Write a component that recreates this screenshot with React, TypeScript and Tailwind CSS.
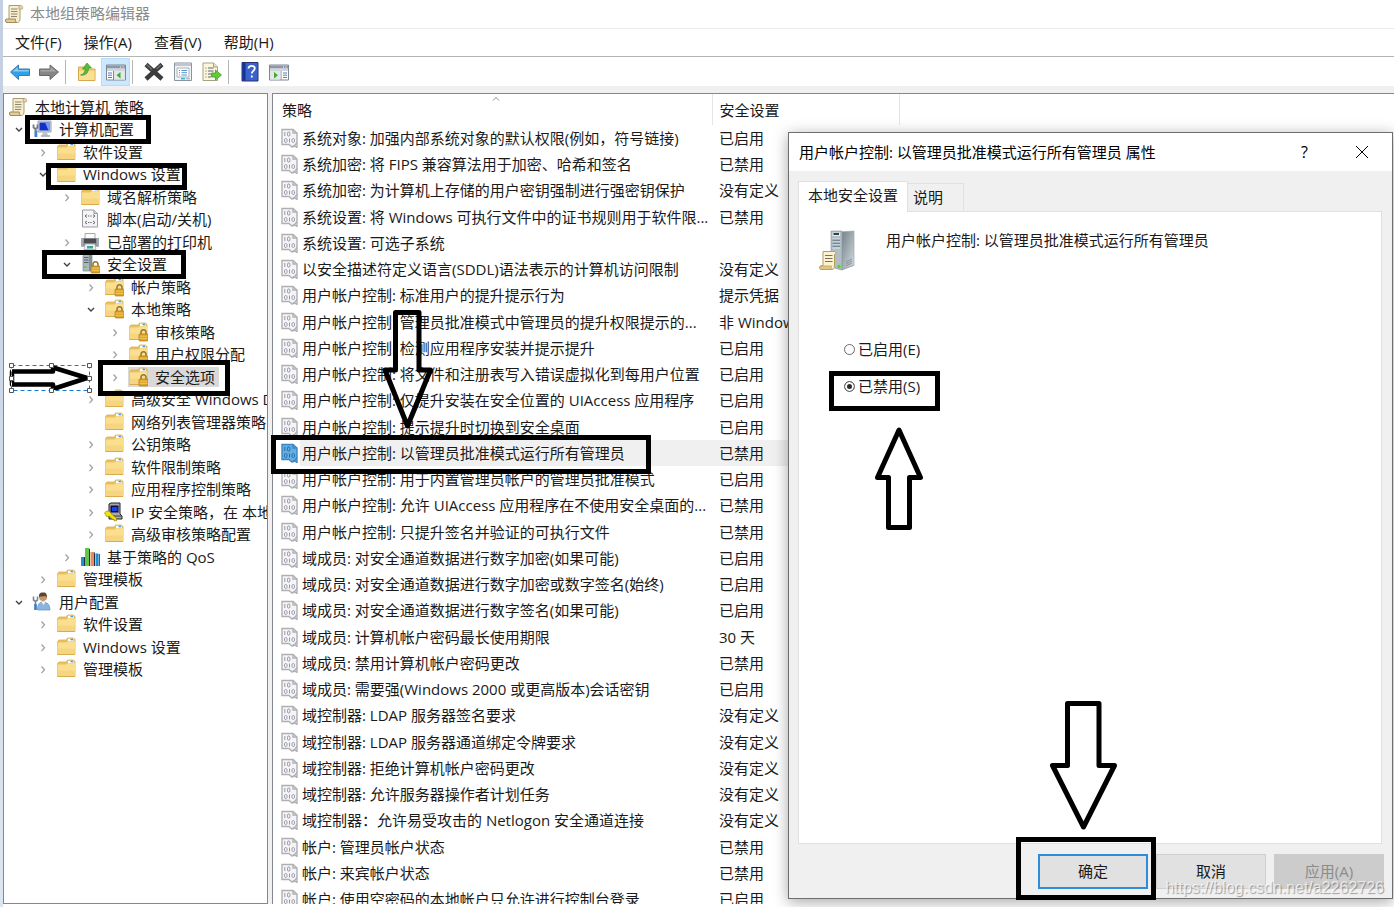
import { useState } from "react"
import type { ReactNode } from "react"
import clsx from "clsx"

type IconName = "scroll" | "computer" | "folder" | "script" | "printer" | "serverLock" | "folderLock" | "ipsec" | "qos" | "user"

type TreeNode = {
  level: number
  label: string
  icon: IconName
  state?: "open" | "closed"
  selected?: boolean
}

const tree: TreeNode[] = [
  { level: 0, label: "本地计算机 策略", icon: "scroll" },
  { level: 1, label: "计算机配置", icon: "computer", state: "open" },
  { level: 2, label: "软件设置", icon: "folder", state: "closed" },
  { level: 2, label: "Windows 设置", icon: "folder", state: "open" },
  { level: 3, label: "域名解析策略", icon: "folder", state: "closed" },
  { level: 3, label: "脚本(启动/关机)", icon: "script" },
  { level: 3, label: "已部署的打印机", icon: "printer", state: "closed" },
  { level: 3, label: "安全设置", icon: "serverLock", state: "open" },
  { level: 4, label: "帐户策略", icon: "folderLock", state: "closed" },
  { level: 4, label: "本地策略", icon: "folderLock", state: "open" },
  { level: 5, label: "审核策略", icon: "folderLock", state: "closed" },
  { level: 5, label: "用户权限分配", icon: "folderLock", state: "closed" },
  { level: 5, label: "安全选项", icon: "folderLock", state: "closed", selected: true },
  { level: 4, label: "高级安全 Windows Defender 防火墙", icon: "folder", state: "closed" },
  { level: 4, label: "网络列表管理器策略", icon: "folder" },
  { level: 4, label: "公钥策略", icon: "folder", state: "closed" },
  { level: 4, label: "软件限制策略", icon: "folder", state: "closed" },
  { level: 4, label: "应用程序控制策略", icon: "folder", state: "closed" },
  { level: 4, label: "IP 安全策略，在 本地计算机", icon: "ipsec", state: "closed" },
  { level: 4, label: "高级审核策略配置", icon: "folder", state: "closed" },
  { level: 3, label: "基于策略的 QoS", icon: "qos", state: "closed" },
  { level: 2, label: "管理模板", icon: "folder", state: "closed" },
  { level: 1, label: "用户配置", icon: "user", state: "open" },
  { level: 2, label: "软件设置", icon: "folder", state: "closed" },
  { level: 2, label: "Windows 设置", icon: "folder", state: "closed" },
  { level: 2, label: "管理模板", icon: "folder", state: "closed" },
]

const indent = ["pl-1", "pl-[7px]", "pl-[31px]", "pl-[55px]", "pl-[79px]", "pl-[103px]"]

const policies: [string, string][] = [
  ["系统对象: 加强内部系统对象的默认权限(例如，符号链接)", "已启用"],
  ["系统加密: 将 FIPS 兼容算法用于加密、哈希和签名", "已禁用"],
  ["系统加密: 为计算机上存储的用户密钥强制进行强密钥保护", "没有定义"],
  ["系统设置: 将 Windows 可执行文件中的证书规则用于软件限...", "已禁用"],
  ["系统设置: 可选子系统", ""],
  ["以安全描述符定义语言(SDDL)语法表示的计算机访问限制", "没有定义"],
  ["用户帐户控制: 标准用户的提升提示行为", "提示凭据"],
  ["用户帐户控制: 管理员批准模式中管理员的提升权限提示的...", "非 Windows 二进制文件的同意提示"],
  ["用户帐户控制: 检测应用程序安装并提示提升", "已启用"],
  ["用户帐户控制: 将文件和注册表写入错误虚拟化到每用户位置", "已启用"],
  ["用户帐户控制: 仅提升安装在安全位置的 UIAccess 应用程序", "已启用"],
  ["用户帐户控制: 提示提升时切换到安全桌面", "已启用"],
  ["用户帐户控制: 以管理员批准模式运行所有管理员", "已禁用"],
  ["用户帐户控制: 用于内置管理员帐户的管理员批准模式", "已启用"],
  ["用户帐户控制: 允许 UIAccess 应用程序在不使用安全桌面的...", "已禁用"],
  ["用户帐户控制: 只提升签名并验证的可执行文件", "已禁用"],
  ["域成员: 对安全通道数据进行数字加密(如果可能)", "已启用"],
  ["域成员: 对安全通道数据进行数字加密或数字签名(始终)", "已启用"],
  ["域成员: 对安全通道数据进行数字签名(如果可能)", "已启用"],
  ["域成员: 计算机帐户密码最长使用期限", "30 天"],
  ["域成员: 禁用计算机帐户密码更改", "已禁用"],
  ["域成员: 需要强(Windows 2000 或更高版本)会话密钥", "已启用"],
  ["域控制器: LDAP 服务器签名要求", "没有定义"],
  ["域控制器: LDAP 服务器通道绑定令牌要求", "没有定义"],
  ["域控制器: 拒绝计算机帐户密码更改", "没有定义"],
  ["域控制器: 允许服务器操作者计划任务", "没有定义"],
  ["域控制器：允许易受攻击的 Netlogon 安全通道连接", "没有定义"],
  ["帐户: 管理员帐户状态", "已禁用"],
  ["帐户: 来宾帐户状态", "已禁用"],
  ["帐户: 使用空密码的本地帐户只允许进行控制台登录", "已启用"],
]

const SELECTED_POLICY = 12

function ScrollShape() {
  return (
    <>
      <path d="M5 1.500h11v13c0 2.500-1 4-2.500 4H3c-1.500 0-2-2-.5-3h2.500z" fill="#f7edcb" stroke="#a99c78" />
      <path d="M2 15h9.500c-.5 1.500 0 3.500 1.500 3.500H3c-1.500 0-2-2.500-1-3.500z" fill="#e2cd96" stroke="#a08c5c" />
      <path d="M15 5V3c0-1 1-1.700 2.200-1.500C19 2 19 5 18 5z" fill="#e8d9a8" stroke="#a99c78" strokeWidth=".8" />
      <path d="M7 5h6.500M7 7.500h6.500M7 10h6.500M7 12.500h6" stroke="#8d8672" />
    </>
  )
}

function FolderShape() {
  return (
    <>
      <path d="M1.500 4.500 3 3h7.500l1-2h6l1.500 1.500V17.500H1.500z" fill="#e8c165" stroke="#d9ad4c" strokeWidth=".8" />
      <path d="M12 1.700h5.500V4H12z" fill="#fff" />
      <path d="M14.500 1.700H17v1.600h-2.500z" fill="#4a9be0" />
      <path d="M1.500 5.500h9L12 4.200h7V17.500H1.500z" fill="#fbdf8f" />
      <path d="M2 11.500h17v6H2z" fill="#f6d580" />
      <path d="M1.500 17.500h17.500" stroke="#d9ac4b" />
    </>
  )
}

function LockShape() {
  return (
    <>
      <path d="M13 12.500V10.500a2.500 2.800 0 0 1 5 0v2" fill="none" stroke="#8f7a38" strokeWidth="1.500" />
      <rect x="11" y="12" width="9" height="7" rx="1" fill="#dfa42a" stroke="#a87913" strokeWidth=".7" />
      <path d="M11.500 14.200h8M11.500 16.500h8" stroke="#f7cc5c" strokeWidth=".8" />
    </>
  )
}

function TreeIcon({ name }: { name: IconName }) {
  return (
    <svg className="size-5 shrink-0" viewBox="0 0 20 20" aria-hidden="true">
      {name === "scroll" && <ScrollShape />}
      {name === "folder" && <FolderShape />}
      {name === "folderLock" && (
        <>
          <FolderShape />
          <LockShape />
        </>
      )}
      {name === "computer" && (
        <>
          <path d="M6 2h13v11H6z" fill="#d7dce2" stroke="#9aa2ac" />
          <path d="M7.500 3.500h10v8h-10z" fill="#1430c8" />
          <path d="M13 3.500h4.500v8h-1z" fill="#6f9cf5" />
          <path d="M11 13.500h4l1 3h-6z" fill="#bcc2ca" />
          <path d="M9 17h9" stroke="#a0a6ae" strokeWidth="1.500" />
          <path d="M1.500 5.500v3l2 1.500 2-1.500v-3M3.500 9.500V18" fill="none" stroke="#727c88" strokeWidth="1.800" />
          <path d="M4 11.500V18" stroke="#3f86cf" strokeWidth="2.500" />
        </>
      )}
      {name === "script" && (
        <>
          <path d="M2.500 1h11.500l3.500 3.500V18h-15z" fill="#f4f4f6" stroke="#9b9ba0" />
          <path d="M14 1v3.500h3.500" fill="#d6d6da" stroke="#9b9ba0" />
          <path d="m7 5.500-2 1.500 2 1.500m6-3 2 1.500-2 1.500m-5-1.500h1.300m1 0h1.300M7 12l-2 1.500L7 15m6-3 2 1.500-2 1.500m-5-1.500h1.300m1 0h1.300" fill="none" stroke="#66666c" />
        </>
      )}
      {name === "printer" && (
        <>
          <path d="M5 1.500h10V7H5z" fill="#fbfbfb" stroke="#a5a8ac" />
          <path d="M1 6h18v8.500H1z" fill="#7d8287" />
          <path d="M4 7h12v4H4z" fill="#4a4d50" />
          <path d="M1 6h2.500v8.500H1zM16.500 6H19v8.500h-2.500z" fill="#a3a8ad" />
          <path d="M5 12h10l1 5.500H4z" fill="#edf1f4" stroke="#9aa0a5" strokeWidth=".7" />
          <path d="M7 14h3v2.500H7z" fill="#2fa2d8" />
          <path d="M10 14h3v2.500h-3z" fill="#42a96a" />
        </>
      )}
      {name === "serverLock" && (
        <>
          <path d="M3 1.500 5 0h7v17H3z" fill="#aeb7be" stroke="#7f8a92" strokeWidth=".7" />
          <path d="M9 .5h3V17H9z" fill="#7f919b" />
          <path d="M4 3.500h4.500M4 6h4.500M4 8.500h4.500" stroke="#53626c" />
          <path d="M4 13h2.500" stroke="#5cc43e" strokeWidth="1.500" />
          <LockShape />
        </>
      )}
      {name === "ipsec" && (
        <>
          <path d="m5 2 2-1h9v11l2 2v3H5z" fill="#a7a9ac" stroke="#222" />
          <path d="M6.500 3.500h8v7h-8z" fill="#0b0b46" />
          <path d="M8 5h5.500v4H8z" fill="#1746e0" />
          <path d="M5 14h12" stroke="#3c3c3c" />
          <path d="M.5 11 2.500 9l3 .2L7 11.500l5.500 5v2.300H10v-1.500H8.500L5.500 14.300 2.500 14.500z" fill="#f4e20c" stroke="#857800" strokeWidth=".6" />
        </>
      )}
      {name === "qos" && (
        <>
          <path d="M1 10h4v9H1z" fill="#1793dd" />
          <path d="M5 1h4.500v18H5z" fill="#5fc84c" />
          <path d="M10.500 5H14v14h-3.500z" fill="#f08762" />
          <path d="M15.500 6.500h3V19h-3z" fill="#1793dd" />
          <path d="M4.500 10v9M9.500 2v17M14.500 5.500V19M19.300 7v12" stroke="#253341" />
        </>
      )}
      {name === "user" && (
        <>
          <circle cx="11" cy="5" r="4" fill="#c99668" />
          <path d="M7 5c-.5-4 2-5 4.500-4.500 2.500 0 4 2 3 5.500l-1-2c-2 .5-4 .2-6.500 1z" fill="#584636" />
          <path d="M5.500 18c0-6 2-8 5.500-8s7 2 7 8z" fill="#8ab5dd" stroke="#6691bc" strokeWidth=".7" />
          <path d="m9.500 10 2 3 2-3z" fill="#f3f7fa" />
          <path d="M1.500 4.500V8l2 1.500 2-1.500V4.500M3.500 9v9" fill="none" stroke="#7c8793" strokeWidth="1.600" />
          <path d="M3.500 12v6" stroke="#3e7fc4" strokeWidth="2.600" />
        </>
      )}
    </svg>
  )
}

function Chevron({ state }: { state?: "open" | "closed" }) {
  return (
    <svg className="mr-[5px] size-4 shrink-0" viewBox="0 0 16 16" fill="none" aria-hidden="true">
      {state === "open" && <path d="m5 7 3 3 3-3" stroke="#404040" strokeWidth="1.400" />}
      {state === "closed" && <path d="m6.500 5.500 3 3.300-3 3.300" stroke="#a3a3a3" strokeWidth="1.300" />}
    </svg>
  )
}

function PolicyIcon({ selected }: { selected: boolean }) {
  const stroke = selected ? "#3d88c4" : "#b0b0b3"
  const ink = selected ? "#20659f" : "#8f8da3"
  return (
    <svg className="h-5 w-[17px]" viewBox="0 0 17 20" fill="none" aria-hidden="true">
      <path d="M1 1.500h11l4 3.500V19.500l-3-2-2 1.500-3-2.500H1z" fill={selected ? "#65aee2" : "#f5f5f7"} stroke={stroke} strokeWidth="1.400" />
      <path d="M12 1.500v3.500h4M12 19c2-1 2.500-3 4-4.500" stroke={stroke} strokeWidth="1.400" />
      <path
        d="M3.800 4v4M3.500 11.500a1.300 1.300 0 0 1 2.500 0v2a1.300 1.300 0 0 1-2.500 0zM6.500 5.200a1.200 1.200 0 0 1 2.400 0v1.700a1.200 1.200 0 0 1-2.400 0zM8.500 10.500v4M11 11.500a1.300 1.300 0 0 1 2.500 0v2a1.300 1.300 0 0 1-2.500 0z"
        stroke={ink}
        strokeWidth=".9"
      />
    </svg>
  )
}

function ToolButton({ label, active, children }: { label: string; active?: boolean; children: ReactNode }) {
  return (
    <button
      type="button"
      aria-label={label}
      className={clsx(
        "flex h-7 w-[29px] items-center justify-center border",
        active ? "border-[#b5dcfa] bg-[#cce8ff]" : "border-transparent",
      )}
    >
      <svg className="size-5" viewBox="0 0 20 20" fill="none" aria-hidden="true">
        {children}
      </svg>
    </button>
  )
}

function Separator() {
  return <div className="ml-0.5 mr-1.5 h-6 w-px bg-[#b4b4b4]" />
}

function PaneShape({ flip }: { flip?: boolean }) {
  return (
    <>
      <path d="M.5 3h19v15H.5z" fill="#fff" stroke="#7d8794" />
      <path d="M1 3.500h18v3H1z" fill="#8d97a5" />
      <path d="M14 5h1m1.500 0h1" stroke="#fff" />
      <path d="M1 8h18" stroke="#c2c8d0" strokeWidth="1.500" />
      {flip ? (
        <>
          <path d="M12 9v9" stroke="#7d8794" />
          <path d="M14 11h4M14 13.200h4M14 15.500h4" stroke="#4a7fc0" />
          <path d="M1 9h10.500v8.500H1z" fill="#e3e6ea" />
          <path d="m5 10 4 3.300-4 3.300z" fill="#3fae2a" />
        </>
      ) : (
        <>
          <path d="M7.500 9v9" stroke="#7d8794" />
          <path d="M2 11h4M2 13.200h4M2 15.500h4" stroke="#4a7fc0" />
          <path d="M8 9h11v8.500H8z" fill="#e3e6ea" />
          <path d="m14.500 10-4 3.300 4 3.300z" fill="#3fae2a" />
        </>
      )}
    </>
  )
}

function Toolbar() {
  return (
    <div className="flex h-[29px] items-center bg-white pl-0.5">
      <ToolButton label="后退">
        <path d="M.5 10 8.500 3v4h11v6.500h-11v4z" fill="#31a0e6" stroke="#4378a5" />
        <path d="M2.500 9.500 7.800 5v3h11v1.500z" fill="#7fd0fa" />
      </ToolButton>
      <ToolButton label="前进">
        <path d="M19.500 10 11 3v4H.5v6.500H11v4z" fill="#868686" stroke="#686868" />
        <path d="m17.500 9.500-6-4.500v3h-10v1.500z" fill="#a6a6a6" />
      </ToolButton>
      <Separator />
      <ToolButton label="上移一级">
        <path d="M1.500 5h6l2 2H18v11.500H1.500z" fill="#f3cf78" stroke="#d3aa50" />
        <path d="M2 9h15.500v9H2z" fill="#fbdf93" />
        <path d="M3.500 13c3-.5 4.500-3 4.700-6H5.500L10 1l4.500 5h-3c0 5-3 8-8 7z" fill="#58bc3b" stroke="#398c24" strokeWidth=".6" />
      </ToolButton>
      <ToolButton label="显示/隐藏控制台树" active>
        <PaneShape />
      </ToolButton>
      <Separator />
      <ToolButton label="删除">
        <path d="m2 2.500 16 14.500M18 2.500 2 17" stroke="#3c3c3c" strokeWidth="4.500" />
        <path d="m2.500 2.500 5.500 5M17 3l-4.500 4" stroke="#717171" strokeWidth="1.500" />
      </ToolButton>
      <ToolButton label="属性">
        <path d="M1.500 1h17v17.500h-17z" fill="#f1f4f6" stroke="#8a949c" />
        <path d="M2 1.500h16v2.500H2z" fill="#bfc6cc" />
        <path d="M4 6h12v9H4z" fill="#fff" stroke="#a5b4c1" />
        <path d="M6 8.500h1m1.500 0H14M6 10.700h1m1.500 0H14M6 13h1m1.500 0H14" stroke="#5993c5" />
        <path d="M8 16.700h4" stroke="#36b3d8" strokeWidth="1.500" />
        <path d="M13 16.700h4" stroke="#b4bcc2" strokeWidth="1.500" />
      </ToolButton>
      <ToolButton label="导出列表">
        <path d="M1 1h10.500l4 4v13.500H1z" fill="#fbf6dc" stroke="#a8a282" />
        <path d="M11.500 1v4h4" fill="#e7dfb9" stroke="#a8a282" />
        <path d="M3.500 6h1M6 6h5.500M3.500 9h1M6 9h5.500M3.500 12h1M6 12h3M3.500 15h1M6 15h3" stroke="#5f6470" />
        <path d="M9.500 11h4V8l6 5-6 5v-3h-4z" fill="#5ecb3b" stroke="#38912a" strokeWidth=".7" />
      </ToolButton>
      <Separator />
      <ToolButton label="帮助">
        <path d="M2 .5h16V19H2z" fill="#3a62cc" stroke="#26356f" />
        <path d="M2.500 1h3v17.500h-3z" fill="#163391" />
        <path d="M8.500 6.500c0-3.500 6.300-3.500 6.300-.2 0 2.500-3 2.700-3 5.200M11.800 13.500v2" stroke="#fff" strokeWidth="1.800" />
      </ToolButton>
      <ToolButton label="显示/隐藏操作窗格">
        <PaneShape flip />
      </ToolButton>
    </div>
  )
}

function ConsoleTree() {
  return (
    <nav className="w-[265px] shrink-0 overflow-hidden border border-[#828790] bg-white pt-px" aria-label="控制台树">
      <ul>
        {tree.map((node, i) => (
          <li key={i} className={clsx("flex h-[22px] items-center odd:h-[23px]", indent[node.level])}>
            {node.level > 0 && <Chevron state={node.state} />}
            <a
              href="#"
              className={clsx("flex items-center gap-[7px] whitespace-nowrap pr-1 leading-5", node.selected && "bg-[#d9d9d9]")}
            >
              <TreeIcon name={node.icon} />
              {node.label}
            </a>
          </li>
        ))}
      </ul>
    </nav>
  )
}

function PolicyList() {
  return (
    <main className="min-w-0 flex-1 overflow-hidden border-l border-t border-[#828790] bg-white">
      <table className="w-full table-fixed border-collapse text-left">
        <colgroup>
          <col className="w-[439px]" />
          <col className="w-[187px]" />
          <col />
        </colgroup>
        <thead>
          <tr className="h-[31px]">
            <th className="relative border-r border-[#e5e5e5] p-0 pl-[9px] font-normal leading-5">
              策略
              <svg className="absolute left-1/2 top-0.5 h-1.5 w-2" viewBox="0 0 8 6" fill="none" aria-hidden="true">
                <path d="m1 4.500 3-3 3 3" stroke="#8c8c8c" />
              </svg>
            </th>
            <th className="border-r border-[#e5e5e5] p-0 pl-[7px] font-normal leading-5">安全设置</th>
            <th className="p-0" aria-label="空列" />
          </tr>
        </thead>
        <tbody>
          {policies.map(([name, value], i) => (
            <tr key={name} className="h-[26px] nth-[4n]:h-[27px]">
              <td className="p-0">
                <div className="flex items-center whitespace-nowrap pl-2 leading-[26px]">
                  <PolicyIcon selected={i === SELECTED_POLICY} />
                  <span className={clsx("ml-[2px] flex-1 pl-0.5", i === SELECTED_POLICY && "bg-[#f0f0f0]")}>{name}</span>
                </div>
              </td>
              <td className={clsx("overflow-hidden whitespace-nowrap p-0 pl-[7px] leading-[26px]", i === SELECTED_POLICY && "bg-[#f0f0f0]")}>
                {value}
              </td>
              <td className="p-0" />
            </tr>
          ))}
        </tbody>
      </table>
    </main>
  )
}

function ServerIcon() {
  return (
    <svg className="h-[42px] w-10 shrink-0" viewBox="0 0 40 42" aria-hidden="true">
      <defs>
        <linearGradient id="server-side" x1="0" y1="0" x2="1" y2="1">
          <stop offset="0" stopColor="#73828b" />
          <stop offset="1" stopColor="#d5dde0" />
        </linearGradient>
      </defs>
      <path d="m12 2 4-1 19 1v34l-12 4-11-3z" fill="#b4bec3" />
      <path d="m23 2 12-1v34l-12 5z" fill="url(#server-side)" stroke="#94a0a6" strokeWidth=".6" />
      <path d="M12 1h11v39l-11-3z" fill="#b3bec4" stroke="#87949b" strokeWidth=".6" />
      <path d="M13.500 2.500H21v3.500h-7.500z" fill="#e7edf0" />
      <path d="M14.500 3h5.500v2h-5.500z" fill="#2b404c" />
      <path d="M13.500 9H21M13.500 12H21M13.500 15H21M13.500 18H21" stroke="#dbe4e8" />
      <path d="M13.500 10.200H21M13.500 13.200H21M13.500 16.200H21" stroke="#5c7380" />
      <circle cx="20" cy="36.500" r="1.800" fill="#52da29" />
      <path d="m27 32 6-3m-6 5 6-3m-6 5 6-3" stroke="#7e8b91" strokeWidth=".8" />
      <path d="M4 21.500h11c2 0 2.500 2.500.5 3V36c0 2-1 3.500-3 3.500H2.500c-2.500 0-2-4 0-4H4z" fill="#fbf2d0" stroke="#b39b62" />
      <path d="M1.500 36h11c-1 1.500 0 3.500 1.500 3.500H2.500c-2 0-2.500-2.500-1-3.500z" fill="#e3c67f" stroke="#b39b62" strokeWidth=".7" />
      <path d="M6 25.500h7.500M6 28.500h7.500M6 31.500h7.500" stroke="#77705f" />
    </svg>
  )
}

function PropertiesDialog() {
  const [enabled, setEnabled] = useState(false)
  const radio =
    "mt-px mr-[3px] size-[11px] appearance-none rounded-full border border-[#6b6b6b] bg-white checked:bg-[#2b2b2b] checked:shadow-[inset_0_0_0_2px_white]"
  const button = "h-[35px] w-[110px] bg-[#e1e1e1]"

  return (
    <section
      role="dialog"
      aria-label="用户帐户控制: 以管理员批准模式运行所有管理员 属性"
      className="absolute bottom-2 left-[788px] right-px top-[132px] flex flex-col border border-[#6e6e6e] bg-[#f0f0f0] shadow-[0_3px_14px_rgba(0,0,0,0.35)]"
    >
      <header className="flex h-[38px] shrink-0 items-center bg-white pl-2.5 pr-0.5 text-black">
        <h2 className="flex-1">用户帐户控制: 以管理员批准模式运行所有管理员 属性</h2>
        <button type="button" className="w-[57px] text-base" aria-label="帮助">
          ?
        </button>
        <button type="button" className="flex w-[57px] justify-center" aria-label="关闭">
          <svg className="size-3" viewBox="0 0 12 12" fill="none" stroke="#000" aria-hidden="true">
            <path d="m0 0 12 12M12 0 0 12" />
          </svg>
        </button>
      </header>

      <div className="mt-2.5 flex h-[30px] shrink-0 items-end px-[9px]" role="tablist">
        <button type="button" role="tab" aria-selected="true" className="z-10 -mb-px h-[31px] w-[110px] border border-b-0 border-[#e0e0e0] bg-white pb-1">
          本地安全设置
        </button>
        <button type="button" role="tab" aria-selected="false" className="h-7 w-14 border border-b-0 border-l-0 border-[#e0e0e0] pl-[5px] text-left">
          说明
        </button>
      </div>

      <div className="ml-[9px] mr-2.5 flex-1 border border-[#e0e0e0] bg-white pl-5 pt-[18px]" role="tabpanel">
        <div className="flex">
          <ServerIcon />
          <p className="ml-[27px] leading-5">用户帐户控制: 以管理员批准模式运行所有管理员</p>
        </div>
        <fieldset className="mt-[67px] flex flex-col gap-[17px] pl-[25px]">
          <label className="flex items-center leading-5">
            <input type="radio" name="policy" className={radio} checked={enabled} onChange={() => setEnabled(true)} />
            已启用(E)
          </label>
          <label className="flex items-center leading-5">
            <input type="radio" name="policy" className={radio} checked={!enabled} onChange={() => setEnabled(false)} />
            已禁用(S)
          </label>
        </fieldset>
      </div>

      <footer className="flex justify-end gap-2 pb-[9px] pr-2 pt-2.5">
        <button type="button" className={clsx(button, "border-2 border-[#2f8bdb]")}>
          确定
        </button>
        <button type="button" className={clsx(button, "border border-[#cfcfcf]")}>
          取消
        </button>
        <button type="button" disabled className="h-[35px] w-[110px] bg-[#cccccc] text-[#8b8b8b]">
          应用(A)
        </button>
      </footer>
    </section>
  )
}

// hand-drawn markers that sit on top of the windows
function Annotations() {
  const box = "absolute border-[5px] border-black"
  return (
    <div className="pointer-events-none absolute inset-0">
      <div className={clsx(box, "left-[25px] top-[115px] h-[29px] w-[126px]")} />
      <div className={clsx(box, "left-[46px] top-[163px] h-[27px] w-[141px]")} />
      <div className={clsx(box, "left-[42px] top-[250px] h-[29px] w-[144px]")} />
      <div className={clsx(box, "left-[98px] top-[360px] h-[36px] w-[132px]")} />
      <div className={clsx(box, "left-[271px] top-[435px] h-[39px] w-[380px]")} />
      <div className={clsx(box, "left-[829px] top-[371px] h-[40px] w-[111px]")} />
      <div className={clsx(box, "left-[1016px] top-[837px] h-[63px] w-[140px]")} />

      <svg className="absolute left-[380px] top-[308px] h-[124px] w-[56px]" viewBox="380 308 56 124" fill="none" stroke="#000" strokeWidth="5" strokeLinejoin="round">
        <path d="M395.500 312.500h23.500v57.500h11.500l-23 56-22.500-56h10.500z" />
      </svg>
      <svg className="absolute left-[872px] top-[424px] h-[108px] w-[54px]" viewBox="872 424 54 108" fill="none" stroke="#000" strokeWidth="5" strokeLinejoin="round">
        <path d="M899 430 920.500 477.500h-11v50h-21v-50h-11z" />
      </svg>
      <svg className="absolute left-[1046px] top-[698px] h-[134px] w-[74px]" viewBox="1046 698 74 134" fill="none" stroke="#000" strokeWidth="5" strokeLinejoin="round">
        <path d="M1067.500 703.500h31.500v62h15.500l-31 61.500-31-61.500h15z" />
      </svg>
      <svg className="absolute left-[6px] top-[360px] h-[36px] w-[90px]" viewBox="6 360 90 36" fill="none">
        <path d="M12 371.500H53V367.500L87 378 53 389V384.500H12z" fill="#fff" stroke="#000" strokeWidth="4.500" strokeLinejoin="round" />
        <path d="M11.500 365.500h78v25h-78z" stroke="#fff" />
        <path d="M11.500 365.500h78v25h-78z" stroke="#1878d0" strokeDasharray="4 3" />
        <path
          d="M9.500 363.500h4v4h-4zM49.500 363.500h4v4h-4zM87.500 363.500h4v4h-4zM9.500 376.500h4v4h-4zM87.500 376.500h4v4h-4zM9.500 388.500h4v4h-4zM49.500 388.500h4v4h-4zM87.500 388.500h4v4h-4z"
          fill="#fff"
          stroke="#555"
        />
      </svg>
    </div>
  )
}

export default function App() {
  return (
    <div className="relative flex h-screen overflow-hidden bg-white font-['Open_Sans','Noto_Sans_CJK_SC',sans-serif] text-[15px] text-[#1a1a1a]">
      <div className="w-[3px] shrink-0 bg-gradient-to-b from-[#c3cfe2] to-[#dbe6f0]" />
      <div className="flex min-w-0 flex-1 flex-col pb-[3px]">
        <header className="flex h-7 shrink-0 items-center gap-1.5 pb-px pl-px text-[#8a8a8a]">
          <TreeIcon name="scroll" />
          <h1>本地组策略编辑器</h1>
        </header>
        <nav className="flex h-[29px] shrink-0 items-center gap-[22px] border-y border-t-[#ececec] border-b-[#b5b5b5] pb-px pl-3" aria-label="菜单">
          {["文件(F)", "操作(A)", "查看(V)", "帮助(H)"].map((item) => (
            <button key={item} type="button">
              {item}
            </button>
          ))}
        </nav>
        <Toolbar />
        <div className="flex min-h-0 flex-1 gap-1 bg-[#f0f0f0] pt-[7px]">
          <ConsoleTree />
          <PolicyList />
        </div>
      </div>

      <PropertiesDialog />
      <Annotations />
      <div className="pointer-events-none absolute bottom-[7px] right-2.5 font-['Liberation_Sans',sans-serif] text-base text-white/70 [text-shadow:1px_1px_1px_rgba(0,0,0,0.35)]">
        https://blog.csdn.net/a2262726
      </div>
    </div>
  )
}
